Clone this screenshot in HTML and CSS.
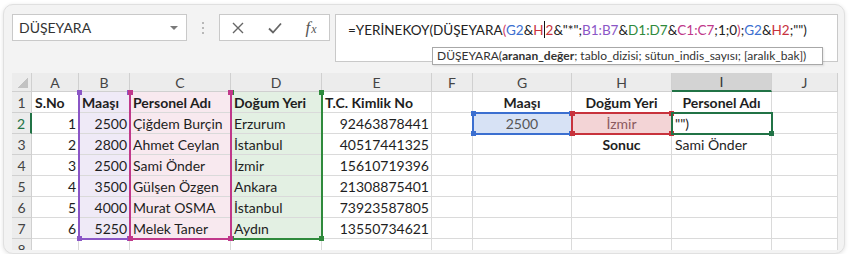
FILE: index.html
```html
<!DOCTYPE html>
<html lang="tr">
<head>
  <meta charset="UTF-8">
  <title>DÜŞEYARA</title>
  <link rel="stylesheet" href="styles.css">
</head>
<body>
<div class="frame">

  <div class="toolbar">
    <div class="namebox"><span>DÜŞEYARA</span><span class="caret"></span></div>
    <div class="grip"><i></i><i></i><i></i></div>
    <div class="fnbtns">
      <span class="btn">
        <svg width="12" height="12" viewBox="0 0 12 12"><path d="M1 1L11 11M11 1L1 11" stroke="#666" stroke-width="1.4" fill="none"/></svg>
      </span>
      <span class="btn">
        <svg width="14" height="12" viewBox="0 0 14 12"><path d="M1 6.5L5 10.5L13 1.5" stroke="#666" stroke-width="1.8" fill="none"/></svg>
      </span>
      <span class="btn fx">f<span class="fx-x">x</span></span>
    </div>
    <div class="formula">
      <span>=YERİNEKOY(DÜŞEYARA</span><span class="paren">(</span><span class="r-blue">G2</span>&amp;<span class="r-red">H<i class="cursor"></i>2</span>&amp;"*";<span class="r-purple">B1:B7</span>&amp;<span class="r-green">D1:D7</span>&amp;<span class="r-pink">C1:C7</span>;1;0<span class="paren">)</span>;<span class="r-blue">G2</span>&amp;<span class="r-red">H2</span>;"")
      <div class="tip">DÜŞEYARA(<b>aranan_değer</b>; tablo_dizisi; sütun_indis_sayısı; [aralık_bak])</div>
    </div>
  </div>

  <div class="sheet">
    <!-- column headers -->
    <div class="c hd corner"><span class="tri"></span></div>
    <div class="c hd">A</div><div class="c hd">B</div><div class="c hd">C</div><div class="c hd">D</div>
    <div class="c hd">E</div><div class="c hd">F</div><div class="c hd">G</div><div class="c hd">H</div>
    <div class="c hd sel">I</div><div class="c hd">J</div>

    <!-- row 1 -->
    <div class="c hd">1</div>
    <div class="c b">S.No</div>
    <div class="c b f-purple">Maaşı</div>
    <div class="c b f-pink">Personel Adı</div>
    <div class="c b f-green">Doğum Yeri</div>
    <div class="c b">T.C. Kimlik No</div>
    <div class="c"></div>
    <div class="c b mid">Maaşı</div>
    <div class="c b mid">Doğum Yeri</div>
    <div class="c b mid">Personel Adı</div>
    <div class="c"></div>

    <!-- row 2 -->
    <div class="c hd act">2</div>
    <div class="c num">1</div>
    <div class="c num f-purple">2500</div>
    <div class="c f-pink">Çiğdem Burçin</div>
    <div class="c f-green">Erzurum</div>
    <div class="c num">92463878441</div>
    <div class="c"></div>
    <div class="c mid f-blue">2500</div>
    <div class="c mid f-red">İzmir</div>
    <div class="c">"")</div>
    <div class="c"></div>

    <!-- row 3 -->
    <div class="c hd">3</div>
    <div class="c num">2</div>
    <div class="c num f-purple">2800</div>
    <div class="c f-pink">Ahmet Ceylan</div>
    <div class="c f-green">İstanbul</div>
    <div class="c num">40517441325</div>
    <div class="c"></div>
    <div class="c"></div>
    <div class="c b mid">Sonuc</div>
    <div class="c">Sami Önder</div>
    <div class="c"></div>

    <!-- row 4 -->
    <div class="c hd">4</div>
    <div class="c num">3</div>
    <div class="c num f-purple">2500</div>
    <div class="c f-pink">Sami Önder</div>
    <div class="c f-green">İzmir</div>
    <div class="c num">15610719396</div>
    <div class="c"></div><div class="c"></div><div class="c"></div><div class="c"></div><div class="c"></div>

    <!-- row 5 -->
    <div class="c hd">5</div>
    <div class="c num">4</div>
    <div class="c num f-purple">3500</div>
    <div class="c f-pink">Gülşen Özgen</div>
    <div class="c f-green">Ankara</div>
    <div class="c num">21308875401</div>
    <div class="c"></div><div class="c"></div><div class="c"></div><div class="c"></div><div class="c"></div>

    <!-- row 6 -->
    <div class="c hd">6</div>
    <div class="c num">5</div>
    <div class="c num f-purple">4000</div>
    <div class="c f-pink">Murat OSMA</div>
    <div class="c f-green">İstanbul</div>
    <div class="c num">73923587805</div>
    <div class="c"></div><div class="c"></div><div class="c"></div><div class="c"></div><div class="c"></div>

    <!-- row 7 -->
    <div class="c hd">7</div>
    <div class="c num">6</div>
    <div class="c num f-purple">5250</div>
    <div class="c f-pink">Melek Taner</div>
    <div class="c f-green">Aydın</div>
    <div class="c num">13550734621</div>
    <div class="c"></div><div class="c"></div><div class="c"></div><div class="c"></div><div class="c"></div>

    <!-- row 8 -->
    <div class="c hd">8</div>
    <div class="c"></div><div class="c"></div><div class="c"></div><div class="c"></div><div class="c"></div>
    <div class="c"></div><div class="c"></div><div class="c"></div><div class="c"></div><div class="c"></div>

    <!-- reference highlights drawn over the grid -->
    <div class="rng rng-green"><i class="k tl"></i><i class="k tr"></i><i class="k bl"></i><i class="k br"></i></div>
    <div class="rng rng-purple"><i class="k tl"></i><i class="k tr"></i><i class="k bl"></i><i class="k br"></i></div>
    <div class="rng rng-pink"><i class="k tl"></i><i class="k tr"></i><i class="k bl"></i><i class="k br"></i></div>
    <div class="rng rng-blue"><i class="k tl"></i><i class="k tr"></i><i class="k bl"></i><i class="k br"></i></div>
    <div class="rng rng-red"><i class="k tl"></i><i class="k tr"></i><i class="k bl"></i><i class="k br"></i></div>
    <div class="rng rng-active"><i class="k br"></i></div>
  </div>

</div>
</body>
</html>
```

FILE: styles.css
```css
body {
    margin: 0;
    background: #fff;
    font-family: Lato, "Open Sans", sans-serif;
}

.frame {
    margin: 4px 0 0 3px;
    width: 842px;
    height: 250px;
    box-sizing: border-box;
    border: 1px solid #e0e0e0;
    border-radius: 10px;
    box-shadow: 0 1px 4px rgba(0, 0, 0, 0.12);
    background: #f3f3f3;
    padding: 9px 0 0 8px;
    overflow: hidden;
}

/* Toolbar / formula bar */
.toolbar {
    display: flex;
    align-items: flex-start;
    height: 48px;
    margin-bottom: 11px;
}

.namebox {
    width: 175px;
    height: 27px;
    box-sizing: border-box;
    border: 1px solid #c9c9c9;
    background: #fff;
    display: flex;
    align-items: center;
    justify-content: space-between;
    padding: 0 8px 0 6px;
    font-size: 14px;
    color: #333;
}

.caret {
    width: 0;
    height: 0;
    border-left: 4px solid transparent;
    border-right: 4px solid transparent;
    border-top: 4px solid #7a7a7a;
}

.grip {
    width: 32px;
    height: 27px;
    display: flex;
    flex-direction: column;
    align-items: center;
    justify-content: center;
    gap: 3px;
}

.grip i {
    width: 2px;
    height: 2px;
    background: #b8b8b8;
}

.fnbtns {
    width: 111px;
    height: 27px;
    box-sizing: border-box;
    border: 1px solid #c9c9c9;
    background: #fff;
    display: grid;
    grid-template-columns: 36px 37px 36px;
}

.btn {
    display: flex;
    align-items: center;
    justify-content: center;
}

.fx {
    align-items: baseline;
    padding-top: 3px;
    font-family: "Liberation Serif", serif;
    font-style: italic;
    font-size: 17px;
    line-height: 20px;
    color: #555;
}

.fx-x {
    font-size: 12px;
    margin-left: 1px;
}

.formula {
    position: relative;
    margin-left: 5px;
    width: 503px;
    height: 48px;
    box-sizing: border-box;
    border: 1px solid #c9c9c9;
    background: #fff;
    padding: 6px 12px;
    font-size: 13.5px;
    color: #222;
    white-space: nowrap;
}

.paren { color: #d0406a; }
.r-blue { color: #3b6fd0; }
.r-red { color: #c8323c; }
.r-purple { color: #8a56c6; }
.r-green { color: #2f8a3c; }
.r-pink { color: #c0388a; }

.cursor {
    display: inline-block;
    width: 1px;
    height: 17px;
    background: #111;
    vertical-align: -3px;
    margin: 0 0.5px;
}

.tip {
    position: absolute;
    left: 96px;
    top: 32px;
    width: 391px;
    height: 18px;
    box-sizing: border-box;
    border: 1px solid #a8a8a8;
    background: #fff;
    box-shadow: 1px 1px 2px rgba(0, 0, 0, 0.1);
    padding: 0 4px;
    font-size: 12px;
    line-height: 16px;
    color: #333;
}

/* Sheet grid */
.sheet {
    position: relative;
    width: 826px;
    height: 177px;
    overflow: hidden;
    display: grid;
    grid-template-columns: 20px 47px 51px 101px 91px 110px 41px 99px 100px 100px 66px;
    grid-template-rows: 19px repeat(8, 21px);
    background: #fff;
}

.c {
    box-sizing: border-box;
    border-right: 1px solid #dadada;
    border-bottom: 1px solid #dadada;
    display: flex;
    align-items: center;
    padding: 0 3px;
    white-space: nowrap;
    overflow: hidden;
    font-size: 14px;
    color: #1e1e1e;
}

.hd {
    background: #ececec;
    color: #444;
    justify-content: center;
    padding: 0;
    border-color: #d0d0d0;
}

.hd.sel {
    background: #d3d3d3;
    border-bottom: 2px solid #217346;
    color: #333;
}

.hd.act {
    color: #217346;
    border-right: 2px solid #217346;
}

.corner {
    justify-content: flex-end;
    align-items: flex-end;
    padding: 0 3px 3px 0;
}

.tri {
    width: 10px;
    height: 10px;
    background: linear-gradient(135deg, transparent 50%, #c2c2c2 50%);
}

.b { font-weight: bold; }
.num { justify-content: flex-end; padding-right: 2px; }
.mid { justify-content: center; }

.f-purple { background: #efeaf7; }
.f-pink { background: #f8e9ef; }
.f-green { background: #e3f0e3; }
.f-blue { background: #d7e2f5; color: #555; }
.f-red { background: #f3d4d6; color: #8a5a5e; }

/* Range outlines */
.rng {
    position: absolute;
    box-sizing: border-box;
    border: 2px solid;
}

.rng-purple { left: 66px; top: 18px; width: 53px; height: 149px; border-color: #8a56c6; border-top: none; color: #8a56c6; }
.rng-pink { left: 117px; top: 18px; width: 103px; height: 149px; border-color: #c0388a; border-top: none; color: #c0388a; }
.rng-green { left: 218px; top: 18px; width: 93px; height: 149px; border-color: #2f8a3c; border-top: none; color: #2f8a3c; }
.rng-blue { left: 460px; top: 39px; width: 101px; height: 23px; border-color: #3b6fd0; color: #3b6fd0; }
.rng-red { left: 559px; top: 39px; width: 102px; height: 23px; border-color: #c8323c; color: #c8323c; }
.rng-active { left: 659px; top: 39px; width: 102px; height: 23px; border-color: #217346; color: #217346; }

.k {
    position: absolute;
    width: 5px;
    height: 5px;
    background: currentColor;
}

.k.tl { left: -3px; top: -3px; }
.k.tr { right: -3px; top: -3px; }
.k.bl { left: -3px; bottom: -3px; }
.k.br { right: -3px; bottom: -3px; }

.rng-purple .k.tl, .rng-purple .k.tr,
.rng-pink .k.tl, .rng-pink .k.tr,
.rng-green .k.tl, .rng-green .k.tr { top: -1px; }
```
